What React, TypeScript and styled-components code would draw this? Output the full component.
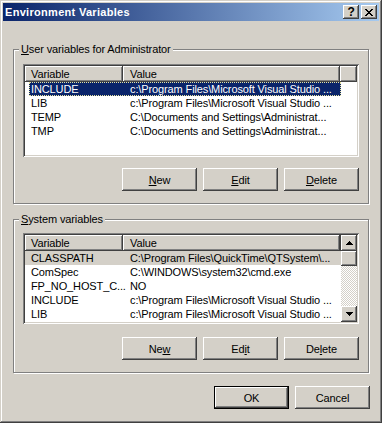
import React from 'react';
import styled, { createGlobalStyle, css } from 'styled-components';

const face = '#D4D0C8';
const shadow = '#808080';
const dark = '#404040';

const GlobalStyle = createGlobalStyle`
  html, body {
    margin: 0;
    padding: 0;
    background: ${face};
  }
  body {
    font-family: Tahoma, "Liberation Sans", Arial, sans-serif;
    font-size: 11px;
    letter-spacing: -0.12px;
    color: #000;
  }
`;

const raised = css`
  background-color: ${face};
  box-shadow: inset -1px -1px ${dark}, inset 1px 1px #fff, inset -2px -2px ${shadow}, inset 2px 2px ${face};
`;

const Window = styled.div`
  width: 382px;
  height: 423px;
  box-sizing: border-box;
  padding: 3px;
  background: ${face};
  box-shadow: inset -1px -1px ${dark}, inset 1px 1px ${face}, inset -2px -2px ${shadow}, inset 2px 2px #fff;
  display: flex;
  flex-direction: column;
`;

const TitleBar = styled.div`
  height: 18px;
  flex: none;
  display: flex;
  align-items: center;
  padding: 0 2px 0 2px;
  background: linear-gradient(to right, #0a246a, #a6caf0);
`;

const Title = styled.div`
  flex: 1;
  color: #fff;
  font-weight: bold;
  font-size: 11px;
  letter-spacing: 0.3px;
  white-space: nowrap;
`;

const CaptionButtons = styled.div`
  display: flex;
  gap: 2px;
`;

const CaptionButton = styled.div`
  ${raised};
  width: 16px;
  height: 14px;
  display: flex;
  align-items: center;
  justify-content: center;
  font-weight: bold;
  font-size: 12px;
  line-height: 14px;
`;

const Body = styled.div`
  flex: 1;
  display: flex;
  flex-direction: column;
  padding: 0 10px;
`;

const Group = styled.div<{ $top: number; $padTop: number }>`
  position: relative;
  margin-top: ${p => p.$top}px;
  border: 1px solid ${shadow};
  box-shadow: inset 1px 1px #fff, 1px 1px #fff;
  padding: ${p => p.$padTop}px 9px 12px 9px;
  display: flex;
  flex-direction: column;
`;

const GroupLabel = styled.span`
  position: absolute;
  top: -7px;
  left: 5px;
  padding: 0 2px;
  background: ${face};
  line-height: 13px;
`;

const Key = styled.span`
  text-decoration: underline;
`;

const ListView = styled.div<{ $h: number }>`
  height: ${p => p.$h}px;
  box-sizing: border-box;
  padding: 2px;
  background: #fff;
  box-shadow: inset 1px 1px ${shadow}, inset -1px -1px #fff, inset 2px 2px ${dark}, inset -2px -2px ${face};
  display: flex;
`;

const ListBody = styled.div`
  flex: 1;
  min-width: 0;
  display: flex;
  flex-direction: column;
  overflow: hidden;
`;

const Header = styled.div`
  display: grid;
  grid-template-columns: 98px 217px 1fr;
  height: 16px;
  flex: none;
`;

const HeaderCell = styled.div<{ $pl: number }>`
  ${raised};
  padding-left: ${p => p.$pl}px;
  line-height: 16px;
  white-space: nowrap;
  overflow: hidden;
`;

const Row = styled.div<{ $inactive?: boolean }>`
  display: flex;
  height: 14px;
  flex: none;
  padding-left: 4px;
  background: ${p => (p.$inactive ? face : 'transparent')};
`;

const Item = styled.div<{ $focus?: boolean }>`
  display: grid;
  grid-template-columns: 94px 218px;
  line-height: 14px;
  ${p =>
    p.$focus &&
    css`
      background: #0a246a;
      color: #fff;
      outline: 1px dotted #e6e2a0;
      outline-offset: -1px;
    `}
`;

const Cell = styled.div<{ $pl: number }>`
  padding-left: ${p => p.$pl}px;
  white-space: nowrap;
`;

const ScrollBar = styled.div`
  width: 16px;
  flex: none;
  display: flex;
  flex-direction: column;
  background: repeating-conic-gradient(#fff 0 25%, ${face} 0 50%) 0 0 / 2px 2px;
`;

const ScrollButton = styled.div<{ $h: number }>`
  ${raised};
  height: ${p => p.$h}px;
  flex: none;
  display: flex;
  align-items: center;
  justify-content: center;
`;

const Thumb = styled.div`
  ${raised};
  height: 15px;
  flex: none;
`;

const Track = styled.div`
  flex: 1;
`;

const ButtonRow = styled.div<{ $top: number }>`
  display: flex;
  justify-content: flex-end;
  gap: 6px;
  margin-top: ${p => p.$top}px;
`;

const Footer = styled.div`
  display: flex;
  justify-content: flex-end;
  gap: 6px;
  margin-top: 13px;
  margin-right: -1px;
`;

const Button = styled.button<{ $default?: boolean }>`
  width: 75px;
  height: 23px;
  padding: 0;
  border: none;
  font: inherit;
  letter-spacing: inherit;
  color: #000;
  ${raised};
  ${p =>
    p.$default &&
    css`
      box-shadow: inset 0 0 0 1px #000, inset -2px -2px ${dark}, inset 2px 2px #fff, inset -3px -3px ${shadow};
    `}
`;

type Var = { name: string; value: string; sel?: 'focus' | 'inactive' };

const userVars: Var[] = [
  { name: 'INCLUDE', value: 'c:\\Program Files\\Microsoft Visual Studio ...', sel: 'focus' },
  { name: 'LIB', value: 'c:\\Program Files\\Microsoft Visual Studio ...' },
  { name: 'TEMP', value: 'C:\\Documents and Settings\\Administrat...' },
  { name: 'TMP', value: 'C:\\Documents and Settings\\Administrat...' },
];

const systemVars: Var[] = [
  { name: 'CLASSPATH', value: 'C:\\Program Files\\QuickTime\\QTSystem\\...', sel: 'inactive' },
  { name: 'ComSpec', value: 'C:\\WINDOWS\\system32\\cmd.exe' },
  { name: 'FP_NO_HOST_C...', value: 'NO' },
  { name: 'INCLUDE', value: 'c:\\Program Files\\Microsoft Visual Studio ...' },
  { name: 'LIB', value: 'c:\\Program Files\\Microsoft Visual Studio ...' },
];

const Arrow = ({ up }: { up?: boolean }) => (
  <svg width="7" height="4" viewBox="0 0 7 4" shapeRendering="crispEdges">
    <polygon points={up ? '3.5,0 7,4 0,4' : '0,0 7,0 3.5,4'} fill="#000" />
  </svg>
);

const CloseGlyph = () => (
  <svg width="8" height="7" viewBox="0 0 8 7" shapeRendering="crispEdges">
    <path d="M0 0h2v1h1v1h2v-1h1v-1h2v1h-1v1h-1v1h-1v1h1v1h1v1h1v1h-2v-1h-1v-1h-2v1h-1v1h-2v-1h1v-1h1v-1h1v-1h-1v-1h-1v-1h-1z" fill="#000" />
  </svg>
);

const VarList = ({ vars, height, scroll }: { vars: Var[]; height: number; scroll?: boolean }) => (
  <ListView $h={height}>
    <ListBody>
      <Header>
        <HeaderCell $pl={6}>Variable</HeaderCell>
        <HeaderCell $pl={7}>Value</HeaderCell>
        <HeaderCell $pl={0} />
      </Header>
      {vars.map((v, i) => (
        <Row key={i} $inactive={v.sel === 'inactive'}>
          <Item $focus={v.sel === 'focus'}>
            <Cell $pl={2}>{v.name}</Cell>
            <Cell $pl={7}>{v.value}</Cell>
          </Item>
        </Row>
      ))}
    </ListBody>
    {scroll && (
      <ScrollBar>
        <ScrollButton $h={16}>
          <Arrow up />
        </ScrollButton>
        <Thumb />
        <Track />
        <ScrollButton $h={16}>
          <Arrow />
        </ScrollButton>
      </ScrollBar>
    )}
  </ListView>
);

export default function App() {
  return (
    <>
      <GlobalStyle />
      <Window>
        <TitleBar>
          <Title>Environment Variables</Title>
          <CaptionButtons>
            <CaptionButton>?</CaptionButton>
            <CaptionButton>
              <CloseGlyph />
            </CaptionButton>
          </CaptionButtons>
        </TitleBar>
        <Body>
          <Group $top={28} $padTop={14}>
            <GroupLabel>
              <Key>U</Key>ser variables for Administrator
            </GroupLabel>
            <VarList vars={userVars} height={93} />
            <ButtonRow $top={11}>
              <Button><Key>N</Key>ew</Button>
              <Button><Key>E</Key>dit</Button>
              <Button><Key>D</Key>elete</Button>
            </ButtonRow>
          </Group>
          <Group $top={15} $padTop={13}>
            <GroupLabel>
              <Key>S</Key>ystem variables
            </GroupLabel>
            <VarList vars={systemVars} height={91} scroll />
            <ButtonRow $top={13}>
              <Button>Ne<Key>w</Key></Button>
              <Button>Ed<Key>i</Key>t</Button>
              <Button>De<Key>l</Key>ete</Button>
            </ButtonRow>
          </Group>
          <Footer>
            <Button $default>OK</Button>
            <Button>Cancel</Button>
          </Footer>
        </Body>
      </Window>
    </>
  );
}
